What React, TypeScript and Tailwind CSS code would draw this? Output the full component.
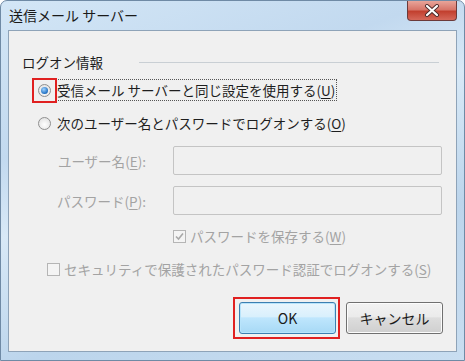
import React from 'react';

const Radio: React.FC<{ checked?: boolean }> = ({ checked }) => (
  <span className="flex h-[13px] w-[13px] items-center justify-center rounded-full border border-[#8f8f8f] bg-[radial-gradient(circle_at_50%_60%,#ffffff,#dcdcdc)]">
    {checked && (
      <span className="h-[7px] w-[7px] rounded-full bg-[radial-gradient(circle_at_40%_35%,#9fd3ff,#1f6fc2_70%,#0d3f80)]" />
    )}
  </span>
);

const Check: React.FC<{ checked?: boolean }> = ({ checked }) => (
  <span className="flex h-[13px] w-[13px] items-center justify-center border border-[#b5b5b5] bg-[#f4f4f4]">
    {checked && (
      <svg width="9" height="9" viewBox="0 0 9 9">
        <path d="M1 4.5 L3.5 7 L8 1.5" fill="none" stroke="#a8a8a8" strokeWidth="1.6" />
      </svg>
    )}
  </span>
);

const Key: React.FC<{ k: string }> = ({ k }) => (
  <>
    (<span className="underline underline-offset-2">{k}</span>)
  </>
);

const App: React.FC = () => {
  return (
    <div className="h-[361px] w-[465px] bg-white font-['Noto_Sans_CJK_JP',sans-serif]">
      <div className="flex h-[361px] w-[465px] flex-col rounded-t-[7px] border border-[#6f8aa5] bg-[linear-gradient(160deg,#d3e6f6_0%,#c2d9ef_30%,#d8e9f7_45%,#bcd5ec_70%,#c9def1_100%)]">
        {/* title bar */}
        <div className="flex h-[29px] shrink-0 items-start justify-between">
          <div className="pl-[8px] pt-[4px] text-[14px] leading-[20px] text-[#1a1a1a]">送信メール サーバー</div>
          <div className="mr-[7px] flex h-[20px] w-[50px] items-center justify-center rounded-b-[4px] border border-t-0 border-[#6b3a3a] bg-[linear-gradient(#e8a59a_0%,#d7766a_45%,#c2402f_55%,#d5685a_100%)]">
            <svg width="16" height="13" viewBox="0 0 16 13">
              <path d="M3 2 L13 11 M13 2 L3 11" stroke="#4a2a2a" strokeWidth="4" strokeLinecap="round" />
              <path d="M3 2 L13 11 M13 2 L3 11" stroke="#ffffff" strokeWidth="2.2" strokeLinecap="round" />
            </svg>
          </div>
        </div>

        {/* client area */}
        <div className="mx-[7px] flex h-[322px] flex-col border border-[#8ea3b8] bg-[#f0f0f0] text-[13.5px] leading-[20px]">
          <div className="mt-[21px] flex h-[20px] items-center pl-[13px] text-[#1e1e1e]">
            <span>ログオン情報</span>
            <span className="ml-[36px] mr-[17px] h-px flex-1 bg-[#c9cfd4]" />
          </div>

          <div className="mt-[7px] flex h-[22px] items-center pl-[29px]">
            <span className="relative flex items-center">
              <Radio checked />
              <span className="absolute -left-[6px] -top-[6px] h-[25px] w-[25px] border-2 border-[#e02020]" />
            </span>
            <span className="ml-[4px] border border-dotted border-[#555] px-[1px] text-[#1e1e1e]">
              受信メール サーバーと同じ設定を使用する<Key k="U" />
            </span>
          </div>

          <div className="mt-[12px] flex h-[20px] items-center pl-[29px] text-[#1e1e1e]">
            <Radio />
            <span className="ml-[5px] px-[1px]">
              次のユーザー名とパスワードでログオンする<Key k="O" />
            </span>
          </div>

          <div className="mt-[13px] flex h-[29px] items-center text-[#a3a3a3]">
            <span className="w-[137px] text-right">
              ユーザー名<Key k="E" />:
            </span>
            <span className="ml-[27px] h-[29px] w-[269px] rounded-[2px] border border-[#c4c4c4] bg-[#f0f0f0]" />
          </div>

          <div className="mt-[11px] flex h-[29px] items-center text-[#a3a3a3]">
            <span className="w-[137px] text-right">
              パスワード<Key k="P" />:
            </span>
            <span className="ml-[27px] h-[29px] w-[269px] rounded-[2px] border border-[#c4c4c4] bg-[#f0f0f0]" />
          </div>

          <div className="mt-[11px] flex h-[20px] items-center pl-[164px] text-[#a3a3a3]">
            <Check checked />
            <span className="ml-[4px]">
              パスワードを保存する<Key k="W" />
            </span>
          </div>

          <div className="mt-[13px] flex h-[20px] items-center pl-[38px] text-[#a3a3a3]">
            <Check />
            <span className="ml-[4px]">
              セキュリティで保護されたパスワード認証でログオンする<Key k="S" />
            </span>
          </div>

          <div className="mt-[23px] flex h-[32px] justify-end gap-[10px] pr-[13px] text-[14px]">
            <div className="relative">
              <button className="h-[32px] w-[97px] rounded-[3px] border border-[#3c7fb1] bg-[linear-gradient(#eaf6fd_0%,#d9f0fc_45%,#bee6fd_50%,#a7d9f5_100%)] text-[#1a1a1a] shadow-[inset_0_0_0_1px_#b8e4fb]">
                OK
              </button>
              <span className="absolute -left-[6px] -top-[5px] h-[42px] w-[107px] border-2 border-[#e02020]" />
            </div>
            <button className="h-[32px] w-[97px] rounded-[3px] border border-[#707070] bg-[linear-gradient(#f2f2f2_0%,#ebebeb_45%,#dddddd_50%,#cfcfcf_100%)] text-[#1a1a1a] shadow-[inset_0_0_0_1px_#fcfcfc]">
              キャンセル
            </button>
          </div>
        </div>
      </div>
    </div>
  );
};

export default App;
